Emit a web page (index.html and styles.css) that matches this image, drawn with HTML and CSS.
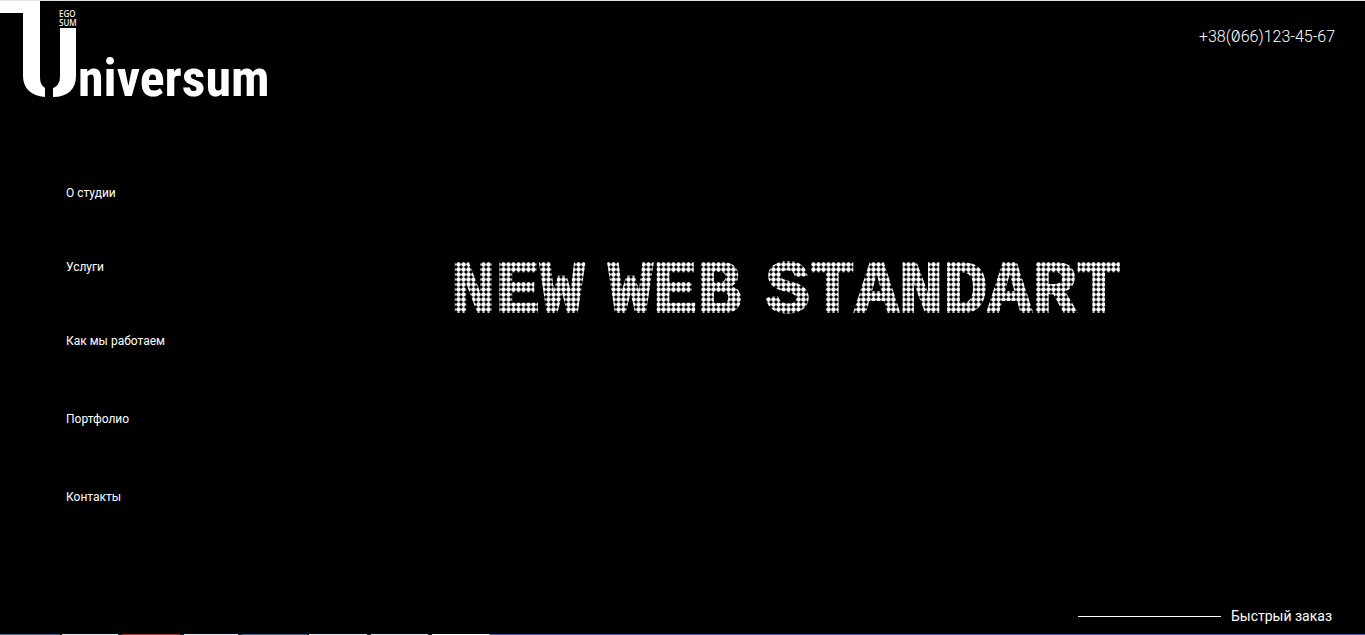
FILE: index.html
```html
<!DOCTYPE html>
<html lang="ru">
<head>
<meta charset="utf-8">
<meta name="viewport" content="width=device-width, initial-scale=1">
<title>Universum</title>
<link rel="stylesheet" href="styles.css">
</head>
<body>
<div class="page">
  <header class="header">
    <a class="logo" href="#" aria-label="Ego sum Universum">
      <svg class="logo-mark" width="290" height="110" viewBox="0 0 290 110" aria-hidden="true">
        <path fill="#fff" d="M0 0H40V75C40 81 41 84 45 87V96C31 95 23 87 23 75V12H0Z"/>
        <path fill="#fff" d="M60 27H76V75C76 88 68 96 53 96V87C58 85 60 81 60 75Z"/>
        <text class="logo-motto" x="59" y="16">EGO</text>
        <text class="logo-motto" x="59" y="25">SUM</text>
        <text class="logo-name" x="78" y="95">niversum</text>
      </svg>
    </a>
    <a class="phone" href="tel:+380661234567">+38(<span class="slashed">0</span>66)123-45-67</a>
  </header>
  <main class="main">
    <nav class="menu">
      <a href="#">О студии</a>
      <a href="#">Услуги</a>
      <a href="#">Как мы работаем</a>
      <a href="#">Портфолио</a>
      <a href="#">Контакты</a>
    </nav>
    <h1 class="headline"><span>NEW</span> <span>WEB</span> <span>STANDART</span></h1>
  </main>
  <footer class="footer">
    <a class="order" href="#"><span class="rule"></span>Быстрый заказ</a>
  </footer>
  <div class="strip"></div>
</div>
</body>
</html>
```

FILE: styles.css
```css
* { box-sizing: border-box; }
body {
  margin: 0;
  background: #000;
  color: #fff;
  font-family: Roboto, "Open Sans", sans-serif;
}
a { color: inherit; text-decoration: none; }
.page {
  min-height: 100vh;
  display: flex;
  flex-direction: column;
  border-top: 1px solid #dfe3e3;
}
.header {
  display: flex;
  justify-content: space-between;
  align-items: flex-start;
}
.logo-mark { display: block; }
.logo-motto { fill: #fff; font: 500 8px "Noto Sans", sans-serif; }
.logo-name { fill: #fff; font: bold 52px "Roboto Condensed", Roboto, sans-serif; }
.phone {
  padding: 25px 30px 0 0;
  font-size: 16px;
  line-height: 20px;
  font-weight: 300;
}
.slashed { font-family: Inter, sans-serif; font-feature-settings: "zero"; }
.main {
  flex: 1;
  display: flex;
  align-items: flex-start;
}
.menu {
  width: 34%;
  flex: none;
  display: flex;
  flex-direction: column;
  align-items: flex-start;
  gap: 54px;
  padding: 72px 0 0 66px;
  font-size: 12px;
  line-height: 20px;
}
.menu a:nth-child(n+4) { margin-top: 4px; }
.headline {
  display: flex;
  gap: 24px;
  margin: 141px 0 0 -13px;
  font: bold 74px/80px "Liberation Mono", monospace;
  -webkit-text-stroke: 2px #fff;
  -webkit-mask: radial-gradient(circle closest-side, #000 75%, transparent 100%) 0 0 / 5px 5px;
  mask: radial-gradient(circle closest-side, #000 75%, transparent 100%) 0 0 / 5px 5px;
}
.footer {
  display: flex;
  justify-content: flex-end;
  padding: 0 33px 8px 0;
}
.order {
  display: flex;
  align-items: center;
  gap: 10px;
  font-size: 14px;
  line-height: 20px;
}
.rule { width: 143px; height: 1px; background: #fff; }
.strip {
  height: 1px;
  background: linear-gradient(90deg,
    #4a6797 60px, #111 60px 62px, #e8e8f4 62px 118px, #223 118px 122px,
    #b33a3c 122px 180px, #223 180px 184px, #e8e8f4 184px 238px, #223 238px 242px,
    #4a6797 242px 307px, #111 307px 309px, #e8e8f4 309px 367px, #223 367px 371px,
    #e8e8f4 371px 428px, #223 428px 432px, #fff 432px 489px, #4a5da0 490px);
}
```
